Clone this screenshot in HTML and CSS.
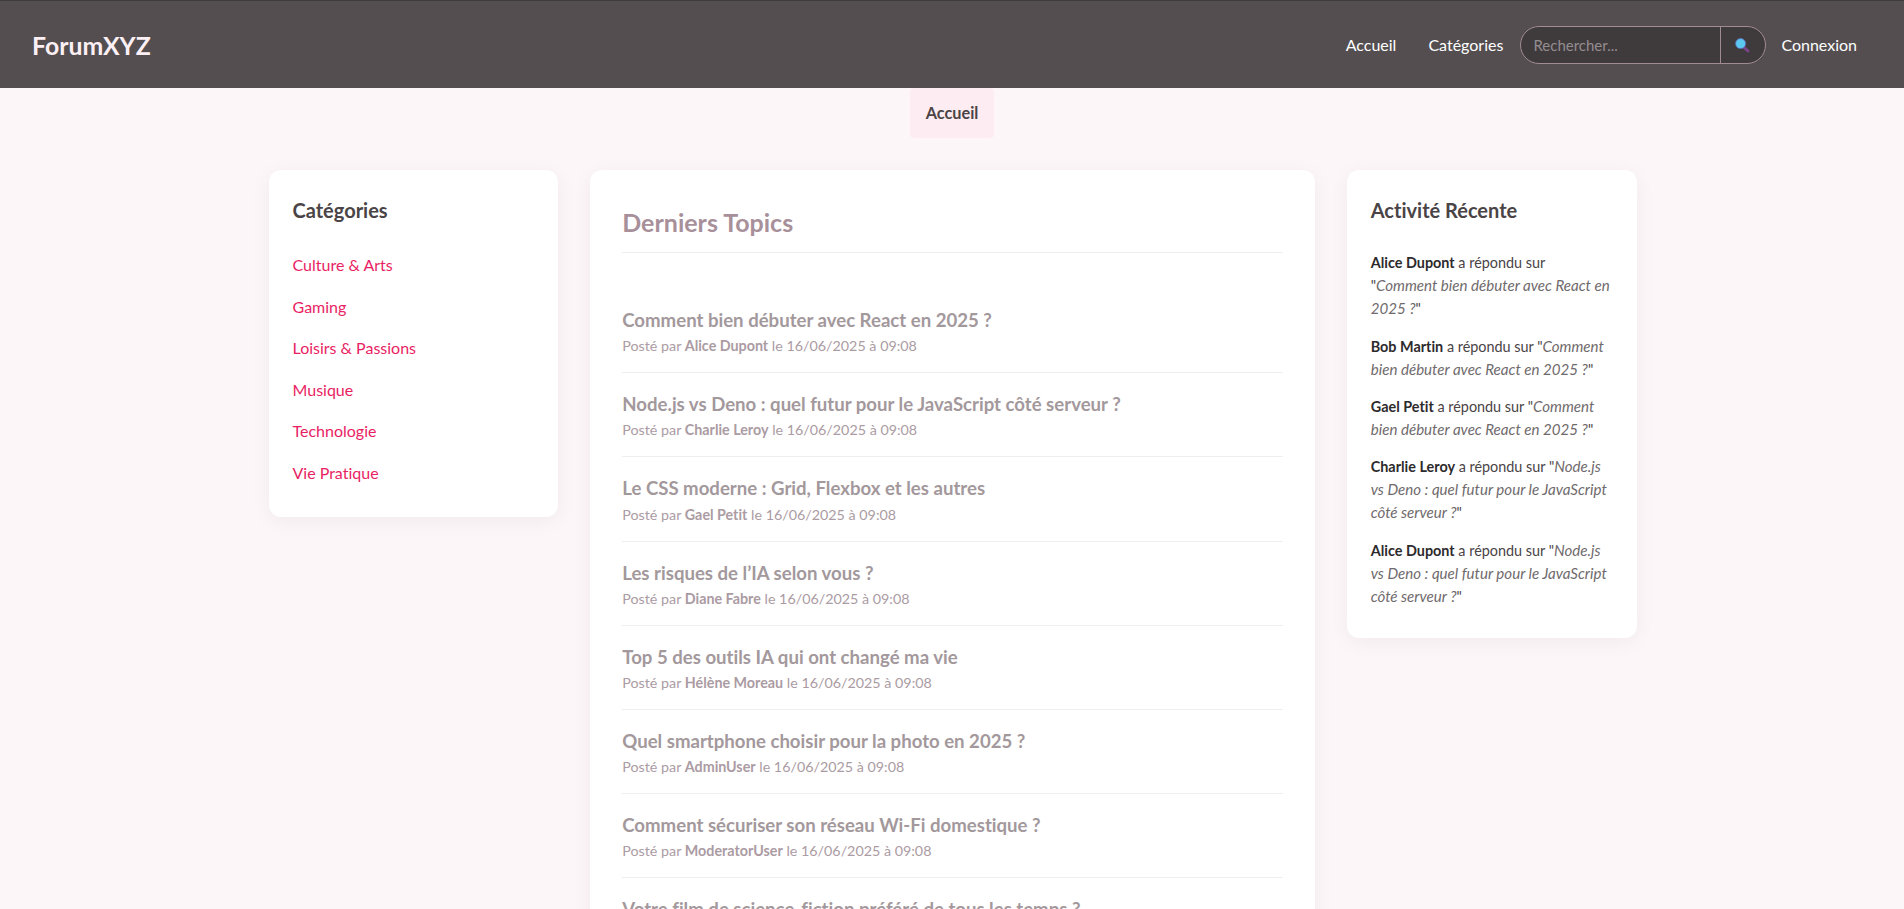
FILE: index.html
```html
<!DOCTYPE html>
<html lang="fr">
<head>
    <meta charset="UTF-8">
    <meta name="viewport" content="width=device-width, initial-scale=1.0">
    <title>ForumXYZ</title>
    <link rel="stylesheet" href="styles.css">
</head>
<body>
    <header class="site-header">
        <a class="logo" href="#">ForumXYZ</a>
        <nav class="main-nav">
            <a href="#">Accueil</a>
            <a href="#">Catégories</a>
            <form class="search">
                <input type="text" placeholder="Rechercher...">
                <button type="button" aria-label="Rechercher">
                    <svg width="16" height="16" viewBox="0 0 16 16">
                        <path d="M10 10.4 L14 14" stroke="#7a4488" stroke-width="3" stroke-linecap="round"/>
                        <circle cx="6.6" cy="6.6" r="5" fill="#5cc8f0" stroke="#5a6fc0" stroke-width="0.8"/>
                    </svg>
                </button>
            </form>
            <a href="#">Connexion</a>
        </nav>
    </header>

    <div class="sub-nav">
        <a href="#">Accueil</a>
    </div>

    <div class="layout">
        <aside class="card side">
            <h3>Catégories</h3>
            <ul class="cat-list">
                <li><a href="#">Culture &amp; Arts</a></li>
                <li><a href="#">Gaming</a></li>
                <li><a href="#">Loisirs &amp; Passions</a></li>
                <li><a href="#">Musique</a></li>
                <li><a href="#">Technologie</a></li>
                <li><a href="#">Vie Pratique</a></li>
            </ul>
        </aside>

        <main class="card topics">
            <h2>Derniers Topics</h2>
            <ul class="topic-list">
                <li>
                    <h4>Comment bien débuter avec React en 2025 ?</h4>
                    <p>Posté par <strong>Alice Dupont</strong> le 16/06/2025 à 09:08</p>
                </li>
                <li>
                    <h4>Node.js vs Deno : quel futur pour le JavaScript côté serveur ?</h4>
                    <p>Posté par <strong>Charlie Leroy</strong> le 16/06/2025 à 09:08</p>
                </li>
                <li>
                    <h4>Le CSS moderne : Grid, Flexbox et les autres</h4>
                    <p>Posté par <strong>Gael Petit</strong> le 16/06/2025 à 09:08</p>
                </li>
                <li>
                    <h4>Les risques de l’IA selon vous ?</h4>
                    <p>Posté par <strong>Diane Fabre</strong> le 16/06/2025 à 09:08</p>
                </li>
                <li>
                    <h4>Top 5 des outils IA qui ont changé ma vie</h4>
                    <p>Posté par <strong>Hélène Moreau</strong> le 16/06/2025 à 09:08</p>
                </li>
                <li>
                    <h4>Quel smartphone choisir pour la photo en 2025 ?</h4>
                    <p>Posté par <strong>AdminUser</strong> le 16/06/2025 à 09:08</p>
                </li>
                <li>
                    <h4>Comment sécuriser son réseau Wi-Fi domestique ?</h4>
                    <p>Posté par <strong>ModeratorUser</strong> le 16/06/2025 à 09:08</p>
                </li>
                <li>
                    <h4>Votre film de science-fiction préféré de tous les temps ?</h4>
                    <p>Posté par <strong>Alice Dupont</strong> le 16/06/2025 à 09:08</p>
                </li>
            </ul>
        </main>

        <aside class="card side">
            <h3>Activité Récente</h3>
            <ul class="activity-list">
                <li><strong>Alice Dupont</strong> a répondu sur "<em>Comment bien débuter avec React en 2025 ?</em>"</li>
                <li><strong>Bob Martin</strong> a répondu sur "<em>Comment bien débuter avec React en 2025 ?</em>"</li>
                <li><strong>Gael Petit</strong> a répondu sur "<em>Comment bien débuter avec React en 2025 ?</em>"</li>
                <li><strong>Charlie Leroy</strong> a répondu sur "<em>Node.js vs Deno : quel futur pour le JavaScript côté serveur ?</em>"</li>
                <li><strong>Alice Dupont</strong> a répondu sur "<em>Node.js vs Deno : quel futur pour le JavaScript côté serveur ?</em>"</li>
            </ul>
        </aside>
    </div>
</body>
</html>
```

FILE: styles.css
```css
:root {
    --bg-color: #fcf6f8;
    --header-bg: #544e50;
    --text-color: #4a4446;
    --pink: #e91e63;
    --muted-border: #a08c94;
    --line: #eeeeee;
}

* {
    box-sizing: border-box;
}

html, body {
    height: 100%;
    overflow: hidden;
}

body {
    margin: 0;
    background: var(--bg-color);
    color: var(--text-color);
    font-family: Lato, "Open Sans", sans-serif;
    font-size: 16px;
    line-height: 1.6;
    font-variant-ligatures: none;
}

a {
    color: inherit;
    text-decoration: none;
}

ul {
    list-style: none;
    margin: 0;
    padding: 0;
}

/* header */
.site-header {
    height: 88px;
    display: flex;
    align-items: center;
    justify-content: space-between;
    padding: 0 31px 0 32px;
    background: var(--header-bg);
    border-top: 1px solid #3d3a3c;
    color: #fff;
}

.logo {
    padding-top: 3px;
    font-size: 24.8px;
    font-weight: 700;
    color: #fdf0f5;
}

.main-nav {
    display: flex;
    align-items: center;
    font-size: 16px;
}

.main-nav > a {
    padding: 9px 16px;
}

.search {
    display: flex;
    height: 38px;
    width: 246px;
    margin: 0 -1px 0 1px;
    border: 1px solid var(--muted-border);
    border-radius: 19px;
    overflow: hidden;
    background: #3f3a3c;
}

.search input {
    width: 200px;
    padding: 0 12px;
    border: 0;
    border-right: 1px solid var(--muted-border);
    outline: 0;
    background: transparent;
    color: #fff;
    font-family: inherit;
    font-size: 15px;
}

.search input::placeholder {
    color: #948d90;
}

.search button {
    flex: 1;
    display: flex;
    align-items: center;
    justify-content: center;
    padding: 0 2px 0 0;
    border: 0;
    background: transparent;
}

/* sub nav */
.sub-nav {
    display: flex;
    justify-content: center;
}

.sub-nav a {
    padding: 12px 16px;
    background: #fdecf1;
    border-radius: 4px;
    font-size: 16.3px;
    line-height: 26px;
    font-weight: 700;
}

/* three columns */
.layout {
    display: grid;
    grid-template-columns: 1fr 2.5fr 1fr;
    gap: 32px;
    align-items: start;
    max-width: 1400px;
    margin: 32px auto 0;
    padding: 0 15.5px 0 16.5px;
}

.card {
    background: #fff;
    border-radius: 12px;
    box-shadow: 0 4px 20px rgba(0, 0, 0, 0.05);
}

.side {
    padding: 24px 24px 23.6px;
}

.side h3 {
    margin: 0 0 18px;
    font-size: 20px;
    font-weight: 700;
}

.cat-list li {
    padding: 8px 0;
}

.cat-list a {
    color: var(--pink);
}

.activity-list li {
    padding: 7.2px 0;
    font-size: 14.4px;
    line-height: 23px;
}

.activity-list strong {
    color: #2d2a2c;
}

.activity-list em {
    color: #6f6a6c;
    font-size: 15.1px;
    line-height: 1;
}

/* topics */
.topics {
    padding: 32px;
}

.topics h2 {
    margin: 0 0 36px;
    padding: 1px 0 11px;
    border-bottom: 1px solid var(--line);
    color: #a8909a;
    font-size: 25px;
    line-height: 38px;
}

.topic-list li {
    padding: 15px 0;
    border-bottom: 1px solid var(--line);
}

.topic-list h4 {
    margin: 0;
    padding-top: 2px;
    color: #a3989c;
    font-size: 18.6px;
    line-height: 28.2px;
}

.topic-list p {
    margin: 0;
    color: #ab9ba3;
    font-size: 14.3px;
    line-height: 23px;
}
```
